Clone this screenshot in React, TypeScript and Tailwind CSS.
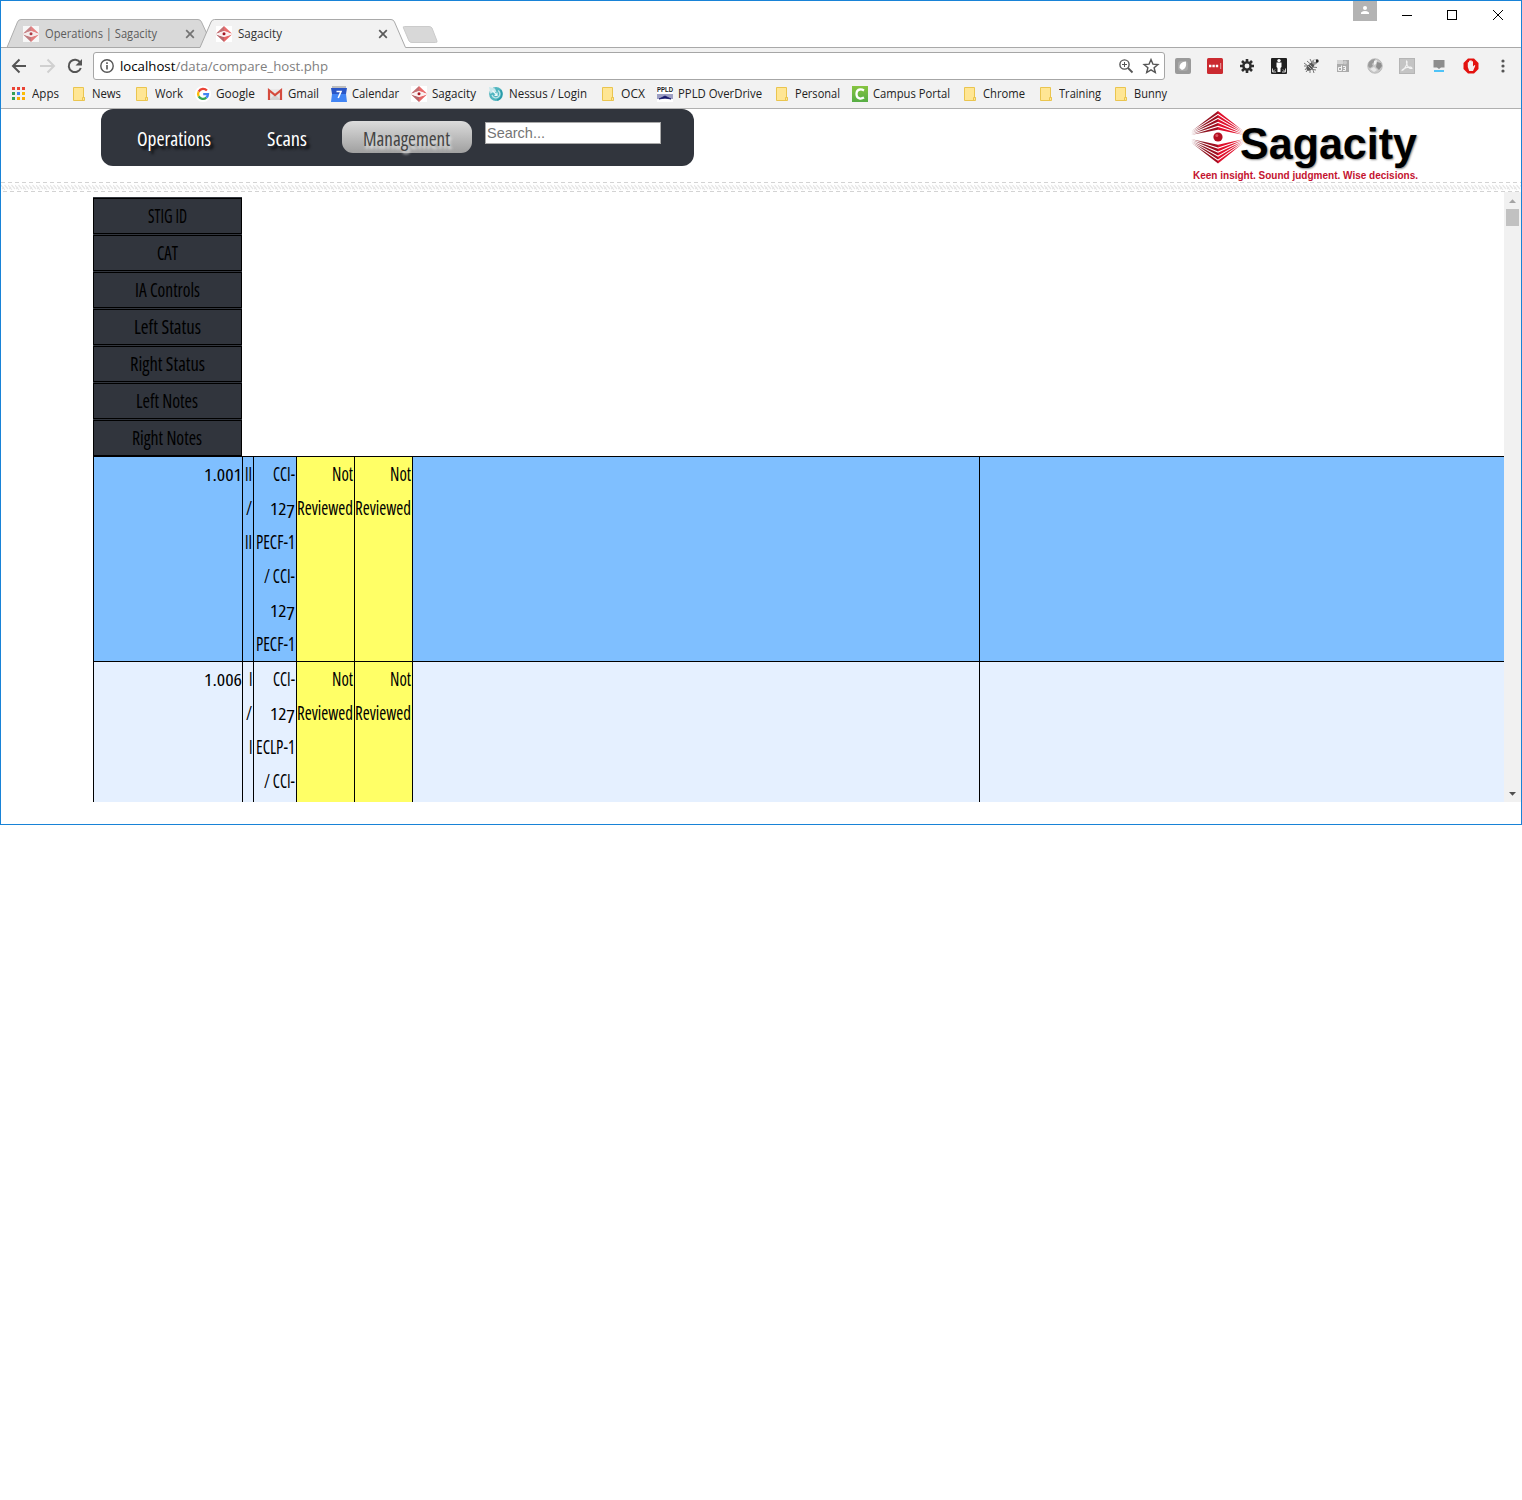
import React, { useLayoutEffect, useRef, useState } from "react";

type FitProps = { w: number; className?: string; children: React.ReactNode };

/** A single line of text condensed or widened to a given width. */
function Fit({ w, className = "", children }: FitProps) {
  const ref = useRef<HTMLSpanElement>(null);
  const [scale, setScale] = useState(1);
  useLayoutEffect(() => {
    const el = ref.current;
    if (el && el.offsetWidth > 0) {
      const drawn = el.getBoundingClientRect().width / scale;
      const next = w / drawn;
      if (Math.abs(next - scale) > 0.002) setScale(next);
    }
  });
  return (
    <span className={"inline-block shrink-0 whitespace-nowrap text-left " + className} style={{ width: w }}>
      <span ref={ref} className="inline-block origin-left" style={{ transform: `scaleX(${scale})` }}>
        {children}
      </span>
    </span>
  );
}

const CONDENSED = "font-['Open_Sans'] [font-stretch:75%] ";

function Diamond() {
  return (
    <svg viewBox="0 0 16 16" className="size-4 shrink-0">
      <rect width="16" height="16" fill="#fff" />
      <path d="M0 7.500 8 0V5L3 7Z" fill="#c47074" />
      <path d="M16 7.500 8 0V5L13 7Z" fill="#e96d6d" />
      <path d="M0 8.500 3 9.500 8 11V16Z" fill="#b9656a" />
      <path d="M16 8.500 13 9.500 8 11V16Z" fill="#e56767" />
      <path d="M1 8Q8 2.500 15 8Q8 13 1 8Z" fill="#fbf0f0" />
      <circle cx="8" cy="7.800" r="1.500" fill="#a51622" />
    </svg>
  );
}

function Folder() {
  return (
    <svg viewBox="0 0 16 16" className="size-4 shrink-0">
      <path d="M2.500 1.500H12.500V11.500H13.500V14.500H2.500Z" fill="#ffe694" stroke="#eac54f" />
      <path d="M11.500 14V11.500H13.500" fill="none" stroke="#eac54f" />
    </svg>
  );
}

function AppsIcon() {
  const c = ["#ea4335", "#ea4335", "#ea4335", "#34a056", "#4285f4", "#fbbc05", "#34a056", "#fbab05", "#fbab05"];
  return (
    <svg viewBox="0 0 16 16" className="size-4 shrink-0">
      {c.map((f, i) => (
        <rect key={i} x={1 + (i % 3) * 5} y={1 + Math.floor(i / 3) * 5} width="3" height="3" fill={f} />
      ))}
    </svg>
  );
}

function GoogleIcon() {
  return (
    <svg viewBox="0 0 16 16" className="size-4 shrink-0">
      <circle cx="8" cy="8" r="8" fill="#fff" />
      <g fill="none" strokeWidth="2.300">
        <path d="M11.900 4.600A5 5 0 0 0 3.700 5.600" stroke="#ea4335" />
        <path d="M3.700 5.600A5 5 0 0 0 3.700 10.400" stroke="#fbbc05" />
        <path d="M3.700 10.400A5 5 0 0 0 11.300 11.700" stroke="#34a853" />
        <path d="M11.300 11.700A5 5 0 0 0 13 8.100H8.200" stroke="#4285f4" />
      </g>
    </svg>
  );
}

function GmailIcon() {
  return (
    <svg viewBox="0 0 16 16" className="size-4 shrink-0">
      <path d="M1 3H15V14H1Z" fill="#e9e9e9" />
      <path d="M2 14 8 8.500 14 14Z" fill="#d4d4d4" />
      <path d="M2 14V4.200L8 9 14 4.200V14" fill="none" stroke="#d54b3d" strokeWidth="2.200" />
    </svg>
  );
}

function CalendarIcon() {
  return (
    <svg viewBox="0 0 16 16" className="size-4 shrink-0">
      <path d="M1 0H15V3H1Z" fill="#bdbdbd" />
      <path d="M0 2H16L15 8H1Z" fill="#2a56c6" />
      <path d="M1 8H15L16 16H0Z" fill="#4285f4" />
      <path d="M5.500 5.500H10L7.200 12" fill="none" stroke="#fff" strokeWidth="1.600" />
    </svg>
  );
}

function NessusIcon() {
  return (
    <svg viewBox="0 0 16 16" className="size-4 shrink-0">
      <circle cx="8" cy="8" r="6.900" fill="#4fb5bf" />
      <path d="M1 1 7 2.500 8.500 6 4.500 6.500 2.500 8Z" fill="#c9e8ec" />
      <path d="M4 9A4 4 0 1 0 10 4.500" fill="none" stroke="#bfe6ea" strokeWidth="1.300" />
      <path d="M4.500 4.500 8.500 8.800M6.500 9.300H9V6.500" fill="none" stroke="#f0fafb" strokeWidth="1.200" />
      <path d="M12.500 4A6.500 6.500 0 0 1 9 14.200" fill="none" stroke="#2a9aa8" strokeWidth="1.300" />
    </svg>
  );
}

function PpldIcon() {
  return (
    <span className="flex h-4 w-4 shrink-0 flex-col">
      <Fit w={16} className="h-[7px] bg-white font-['Liberation_Sans'] text-[7px] font-bold leading-[7px] text-[#222]">PPLD</Fit>
      <svg viewBox="0 0 16 9" className="h-[9px] w-4">
        <rect width="16" height="9" fill="#fff" />
        <rect y="1" width="16" height="5" fill="#9d9fc4" />
        <path d="M2 6 5 4.500 8 3 11 4.500 14 6 11 5.500 8 5 5 5.500Z" fill="#17186b" stroke="#17186b" strokeWidth=".8" />
      </svg>
    </span>
  );
}

function CampusIcon() {
  return (
    <svg viewBox="0 0 16 16" className="size-4 shrink-0">
      <defs>
        <linearGradient id="campus" x2="0" y2="1">
          <stop stopColor="#86c440" />
          <stop offset="1" stopColor="#56ad45" />
        </linearGradient>
      </defs>
      <rect width="16" height="16" fill="url(#campus)" />
      <path d="M12 4.400Q10 3.300 8 3.500Q4.500 4 4.500 8T8 12.500Q10 12.700 12 11.600" fill="none" stroke="#fff" strokeWidth="2.300" />
    </svg>
  );
}

const bookmarks: [string, number, number, () => React.JSX.Element][] = [
  ["Apps", 27, 60, AppsIcon],
  ["News", 29, 63, Folder],
  ["Work", 28, 61, Folder],
  ["Google", 39, 72, GoogleIcon],
  ["Gmail", 31, 64, GmailIcon],
  ["Calendar", 47, 80, CalendarIcon],
  ["Sagacity", 44, 77, Diamond],
  ["Nessus / Login", 78, 112, NessusIcon],
  ["OCX", 24, 57, Folder],
  ["PPLD OverDrive", 84, 117, PpldIcon],
  ["Personal", 45, 78, Folder],
  ["Campus Portal", 77, 110, CampusIcon],
  ["Chrome", 42, 76, Folder],
  ["Training", 42, 75, Folder],
  ["Bunny", 33, 60, Folder],
];

function CloseX() {
  return (
    <svg viewBox="0 0 10 10" className="size-[10px] shrink-0">
      <path d="M1.200 1.200 8.800 8.800M8.800 1.200 1.200 8.800" stroke="#5a5a5a" strokeWidth="1.700" />
    </svg>
  );
}

function TabStrip() {
  return (
    <div className="relative flex h-[47px] bg-white font-['Open_Sans'] text-[12px]">
      <svg viewBox="0 0 1520 47" className="absolute inset-0 h-[47px] w-[1520px]">
        <path d="M6 46.500 16.500 21Q17.500 18.500 20 18.500H197Q199.500 18.500 200.500 21L206 33V46.500Z" fill="#d9d9d9" stroke="#adadad" />
        <path d="M402.500 27Q401.500 25.500 403.500 25.500H428Q430 25.500 431 27L436 40Q436.500 41.500 434.500 41.500H411Q409 41.500 408 40Z" fill="#d8d8d8" stroke="#cbcbcb" />
        <path d="M0 46.500H199L210 21Q211 18.500 213.500 18.500H390Q392.500 18.500 393.500 21L404.500 46.500H1520V48H0Z" fill="#f2f2f2" />
        <path d="M0 46.500H199L210 21Q211 18.500 213.500 18.500H390Q392.500 18.500 393.500 21L404.500 46.500H1520" fill="none" stroke="#a9a9a9" />
      </svg>
      <div className="relative flex h-[28px] w-[193px] translate-y-[19px] items-center pl-[22px] text-[#5c5c5c]">
        <span className="flex opacity-80"><Diamond /></span>
        <Fit w={112} className="ml-[6px]">Operations | Sagacity</Fit>
        <span className="ml-[28px] flex opacity-80"><CloseX /></span>
      </div>
      <div className="relative flex h-[28px] w-[200px] translate-y-[19px] items-center pl-[22px] text-[#333]">
        <Diamond />
        <Fit w={44} className="ml-[6px]">Sagacity</Fit>
        <span className="ml-[96px] flex"><CloseX /></span>
      </div>
      <div className="relative ml-auto flex items-start">
        <div className="flex h-[20px] w-6 justify-center bg-[#b3b3b3] pt-1">
          <svg viewBox="0 0 10 10" className="size-[10px]">
            <circle cx="5" cy="3" r="2" fill="#fff" />
            <path d="M1 9V7.500Q5 4.700 9 7.500V9Z" fill="#fff" />
          </svg>
        </div>
        <svg viewBox="0 0 144 28" className="h-7 w-36" shapeRendering="crispEdges">
          <path d="M25 14.500H35" stroke="#000" />
          <rect x="70.500" y="9.500" width="9" height="9" fill="none" stroke="#000" />
          <path d="M116 9 126 19M126 9 116 19" stroke="#000" shapeRendering="auto" />
        </svg>
      </div>
    </div>
  );
}

const extensionIcons = [
  <>
    <rect width="16" height="16" rx="2" fill="#9a9a9a" />
    <rect x="3" y="3" width="10" height="10" rx="3" fill="#aaa" />
    <path d="M4.500 10Q4 4 11 3.500Q12 11 7 12Z" fill="#fff" />
  </>,
  <>
    <rect width="16" height="16" rx="1.500" fill="#cb2a30" />
    <path d="M2 8H12" stroke="#fff" strokeWidth="2.400" strokeDasharray="2.400 1" />
    <path d="M13.700 5V11" stroke="#e9a0a2" />
  </>,
  <>
    <g stroke="#2d2d2d" strokeWidth="2.600">
      <path d="M8 1V15M1 8H15M3 3 13 13M13 3 3 13" />
    </g>
    <circle cx="8" cy="8" r="4.800" fill="#2d2d2d" />
    <circle cx="8" cy="8" r="2.400" fill="#f2f2f2" />
  </>,
  <>
    <rect width="16" height="16" rx="1" fill="#202020" />
    <circle cx="8" cy="2.600" r="1.700" fill="#fff" />
    <path d="M5.500 4.500H10.500V9L9.500 10V14H6.500V10L5.500 9Z" fill="#fff" />
    <path d="M1.500 10.500V14H5M14.500 10.500V14H11M1.500 14 4 11.500M14.500 14 12 11.500" fill="none" stroke="#ccc" />
  </>,
  <>
    <path d="M1 5 5 8 2 12M4 3 8 6.500M7 1 9 5M7 15 7 11 13 12M11 15 9 9 14 9.500M1 8H5M3 14 6 10" fill="none" stroke="#777" />
    <ellipse cx="7.500" cy="8.500" rx="2.600" ry="5" transform="rotate(42 7.500 8.500)" fill="#555" />
    <path d="M5 8 8 11M6.500 6.500 9.500 9.500" stroke="#ccc" strokeWidth=".8" />
    <circle cx="11.500" cy="4" r="2.600" fill="#999" />
    <circle cx="14" cy="3" r="1.700" fill="#222" />
    <circle cx="12" cy="3" r="1.100" fill="#fff" />
  </>,
  <>
    <path d="M2 2H14V14H2Z" fill="#ababab" />
    <path d="M2 2H8V6H2Z" fill="#d5d5d5" />
    <circle cx="10" cy="4.500" r="2" fill="#c9c9c9" />
    <path d="M3.500 9.500V12.500H6.500V7.500M3.500 9.500H6.500M8 8.500H10.500V12.500H8M8.500 10.500H10.500" fill="none" stroke="#f4f4f4" />
  </>,
  <>
    <circle cx="8" cy="8" r="7.300" fill="#c9c9c9" stroke="#b0b0b0" strokeWidth=".7" />
    <path d="M2 4Q5 .7 8 1L7 4 5 6 6 8 3 10Q1 9 1 7Z" fill="#9a9a9a" />
    <path d="M10 4 14 5 15 8 12 12 9 9Z" fill="#8e8e8e" />
    <path d="M7 3 10 2 9 6 7 7Z" fill="#f2f2f2" />
    <path d="M3 11 7 9 10 12 7 14Z" fill="#e9e9e9" />
  </>,
  <>
    <rect x=".5" y=".5" width="15" height="15" fill="#c4c4c4" stroke="#b5b5b5" />
    <path d="M7.500 3Q9 4 7 8 5 12 3 12.500 3 11 8 9.500T13 10.500Q10 11 8.300 7.500 7 4 7.500 3Z" fill="none" stroke="#f3f3f3" strokeWidth="1.100" />
  </>,
  <>
    <path d="M2.500 2H13.500V9.500H10L8 11 6 9.500H2.500Z" fill="#8d8d8d" />
    <path d="M3 12H13V14H3Z" fill="#4fc3f7" />
  </>,
  <>
    <path d="M5 .5H11L15.500 5V11L11 15.500H5L.5 11V5Z" fill="#e3120f" />
    <path d="M4.800 9V4.500Q5.300 3.500 6 4.500V3Q6.700 2 7.300 3V2.600Q8 1.600 8.600 2.600V3.500Q9.500 2.500 10 4V8.500L11.500 7Q12.800 7 12 8.500L10 13H6.200Z" fill="#f5eeee" />
  </>,
];

function Toolbar() {
  return (
    <div className="flex h-[36px] items-center bg-[#f2f2f2]">
      <svg viewBox="0 0 92 36" className="h-9 w-[92px] shrink-0" fill="none" strokeWidth="2">
        <path d="M25 18H12.500M18.500 11.500 12 18 18.500 24.500" stroke="#555" />
        <path d="M39 18H52M46.500 11.500 53 18 46.500 24.500" stroke="#d0d0d0" />
        <path d="M79.200 14.500A6.200 6.200 0 1 0 79.800 20" stroke="#555" />
        <path d="M81 11V17.500H74.500Z" fill="#555" />
      </svg>
      <div className="flex h-[28px] w-[1072px] shrink-0 items-center rounded-[3px] border border-[#a6a6a6] bg-white pl-[6px] font-['Open_Sans'] text-[13.5px] leading-[26px]">
        <svg viewBox="0 0 14 14" className="size-[14px]">
          <circle cx="7" cy="7" r="6.200" fill="none" stroke="#555" strokeWidth="1.400" />
          <path d="M7 6V10.500M7 3.300V5" stroke="#555" strokeWidth="1.600" />
        </svg>
        <Fit w={208} className="ml-[6px] text-[#808080]"><span className="text-black">localhost</span>/data/compare_host.php</Fit>
        <svg viewBox="0 0 44 18" className="ml-auto mr-px h-[18px] w-11" fill="none" stroke="#555" strokeWidth="1.400">
          <circle cx="5.500" cy="7.500" r="4.600" />
          <path d="M9 11 13.500 15.500" strokeWidth="1.800" />
          <path d="M3 7.500H8M5.500 5V10" strokeWidth="1" />
          <path d="M32 2.500 33.900 7.100 38.900 7.500 35.100 10.700 36.300 15.500 32 12.900 27.700 15.500 28.900 10.700 25.100 7.500 30.100 7.100Z" />
        </svg>
      </div>
      <div className="flex gap-4 pl-[10px]">
        {extensionIcons.map((icon, i) => (
          <svg key={i} viewBox="0 0 16 16" className="size-4">{icon}</svg>
        ))}
      </div>
      <svg viewBox="0 0 4 14" className="ml-[22px] h-[14px] w-1" fill="#555">
        <circle cx="2" cy="2" r="1.600" /><circle cx="2" cy="7" r="1.600" /><circle cx="2" cy="12" r="1.600" />
      </svg>
    </div>
  );
}

function BookmarkBar() {
  return (
    <div className="flex h-[25px] items-start border-b border-[#b0b0b0] bg-[#f2f2f2] pl-[10px] pt-[2px] font-['Open_Sans'] text-[12px] leading-4 text-[#222]">
      {bookmarks.map(([label, w, total, Icon]) => (
        <div key={label} className="flex shrink-0 items-center gap-[5px]" style={{ width: total }}>
          <Icon />
          <Fit w={w} className="h-4">{label}</Fit>
        </div>
      ))}
    </div>
  );
}

function Logo() {
  return (
    <div className="relative h-[73px] w-[230px]">
      <svg viewBox="0 0 54 54" className="absolute -left-px top-[2px] h-[54px] w-[54px]">
        <defs>
          <linearGradient id="ruby" gradientUnits="userSpaceOnUse" x1="1" x2="54">
            <stop stopColor="#c9a3a8" /><stop offset=".25" stopColor="#8d1420" />
            <stop offset=".5" stopColor="#a50d20" /><stop offset=".52" stopColor="#e0102c" />
            <stop offset=".8" stopColor="#e0102c" /><stop offset="1" stopColor="#e8a0a8" />
          </linearGradient>
        </defs>
        <g fill="url(#ruby)">
          {[0, 1, 2, 3, 4].map((i) => (
            <React.Fragment key={i}>
              <path d={`M1 ${20.500 + i * 0.9}L28 ${i * 4}L54 ${20.500 + i * 0.9}L28 ${i * 4 + 2.700}Z`} />
              <path d={`M1 ${31.500 - i * 0.9}L28 ${52.500 - i * 4}L54 ${31.500 - i * 0.9}L28 ${49.800 - i * 4}Z`} />
            </React.Fragment>
          ))}
        </g>
        <circle cx="28" cy="26" r="4.600" fill="#b30f20" />
        <circle cx="26.800" cy="24.500" r="1.500" fill="#dd5560" />
      </svg>
      <div className="pl-[49px] pt-[9px]">
        <Fit w={177} className="block font-['Liberation_Sans'] text-[44px] font-bold leading-[51px] text-black [text-shadow:1px_1px_2px_#888]">Sagacity</Fit>
      </div>
      <div className="flex pl-[2px]">
        <Fit w={225} className="font-['Liberation_Sans'] text-[10.5px] font-bold leading-[13px] text-[#c4122f]">Keen insight. Sound judgment. Wise decisions.</Fit>
      </div>
    </div>
  );
}

function Header() {
  return (
    <div className="flex h-[73px] items-start pl-[100px]">
      <div className={CONDENSED + "flex h-[57px] w-[593px] shrink-0 items-start rounded-[12px] bg-[#31353d] text-[20.5px]"}>
        <Fit w={74} className="ml-[36px] mt-[13px] leading-[32px] font-medium text-white [text-shadow:3px_3px_3px_#000]">Operations</Fit>
        <Fit w={40} className="ml-[56px] mt-[13px] leading-[32px] font-medium text-white [text-shadow:3px_3px_3px_#000]">Scans</Fit>
        <div className="ml-[35px] mt-[12px] flex h-[32px] w-[130px] justify-center rounded-[11px] bg-gradient-to-b from-[#dcdcdc] to-[#a0a0a0]">
          <Fit w={87} className="-ml-px pt-px leading-[32px] text-[#444] [text-shadow:2px_3px_3px_#eee]">Management</Fit>
        </div>
        <div className="ml-[13px] mt-[13px] flex h-[22px] w-[176px] items-center border border-[#a9a9a9] bg-white pl-px">
          <Fit w={58} className="font-['Liberation_Sans'] text-[15px] leading-5 text-[#757575] [font-stretch:100%]">Search...</Fit>
        </div>
      </div>
      <div className="ml-[497px]"><Logo /></div>
    </div>
  );
}

function Stripe() {
  return (
    <svg className="h-[10px] w-[1520px]">
      <defs>
        <pattern id="weave" width="7" height="10" patternUnits="userSpaceOnUse">
          <path d="M0 .5H4M2 9.500H6" stroke="#d3d3d3" />
          <path d="M0 3 4 8M3.500 3 7 7M1 7 3 5" stroke="#e6e6e6" strokeWidth="1.200" />
        </pattern>
      </defs>
      <rect width="1520" height="10" fill="url(#weave)" />
    </svg>
  );
}

const headings: [string, number][] = [
  ["STIG ID", 39], ["CAT", 21], ["IA Controls", 65], ["Left Status", 67],
  ["Right Status", 75], ["Left Notes", 62], ["Right Notes", 70],
];

const widths: Record<string, number> = {
  II: 7, I: 3.5, "/": 6, "CCI-": 22, "PECF-1": 39, "ECLP-1": 39, "/ CCI-": 31, Not: 21, Reviewed: 56,
};

/** One table line; lining digits are set small to sit at old-style height. */
function Line({ text }: { text: string }) {
  if (text === "127")
    return (
      <div className="h-[34px]">
        <Fit w={25} className="text-[17px]">12<span className="relative top-[3px] text-[18px] leading-none">7</span></Fit>
      </div>
    );
  return <div className="h-[34px]"><Fit w={widths[text]}>{text}</Fit></div>;
}

function Cell({ lines, className = "" }: { lines: string[]; className?: string }) {
  return (
    <div className={"flex flex-col items-end border-l border-black " + className}>
      {lines.map((t, i) => <Line key={i} text={t} />)}
    </div>
  );
}

function Row({ id, cat, controls, className }: { id: string; cat: string; controls: string[]; className: string }) {
  return (
    <div className={"grid h-[205px] grid-cols-[149px_11px_43px_58px_58px_567px_525px] border-t border-black leading-[34px] " + className}>
      <div className="border-l border-black text-right"><Fit w={38} className="text-[17px]">{id}</Fit></div>
      <Cell lines={[cat, "/", cat]} className="pr-px" />
      <Cell lines={controls} className="pr-px" />
      <Cell lines={["Not", "Reviewed"]} className="bg-[#ffff66] pr-px" />
      <Cell lines={["Not", "Reviewed"]} className="bg-[#ffff66] pr-px" />
      <Cell lines={[]} />
      <Cell lines={[]} />
    </div>
  );
}

function Results() {
  return (
    <div className="flex h-[610px]">
      <div className={CONDENSED + "h-[610px] w-[1503px] overflow-hidden pl-[92px] pt-[5px] text-[19px] text-black"}>
        <div className="flex h-[259px] w-[149px] flex-col gap-px bg-[#31353d] pt-px">
          {headings.map(([label, w]) => (
            <div key={label} className="flex h-[36px] shrink-0 justify-center border border-black bg-[#31353d] pr-px leading-[35px]">
              <Fit w={w}>{label}</Fit>
            </div>
          ))}
        </div>
        <Row id="1.001" cat="II" controls={["CCI-", "127", "PECF-1", "/ CCI-", "127", "PECF-1"]} className="bg-[#7fbfff]" />
        <Row id="1.006" cat="I" controls={["CCI-", "127", "ECLP-1", "/ CCI-"]} className="bg-[#e5f0ff]" />
      </div>
      <div className="flex w-[17px] flex-col items-center bg-[#f1f1f1]">
        <svg viewBox="0 0 17 17" className="size-[17px]"><path d="M5 11H12L8.500 7.200Z" fill="#a3a3a3" /></svg>
        <div className="h-[17px] w-[13px] bg-[#c1c1c1]" />
        <svg viewBox="0 0 17 17" className="mt-auto size-[17px]"><path d="M5 7H12L8.500 10.800Z" fill="#505050" /></svg>
      </div>
    </div>
  );
}

export default function App() {
  return (
    <div className="h-[1500px] w-[1522px] overflow-hidden bg-white">
      <div className="flex h-[825px] w-[1522px] flex-col border border-[#1883d7] bg-white">
        <TabStrip />
        <Toolbar />
        <BookmarkBar />
        <Header />
        <Stripe />
        <Results />
      </div>
    </div>
  );
}
